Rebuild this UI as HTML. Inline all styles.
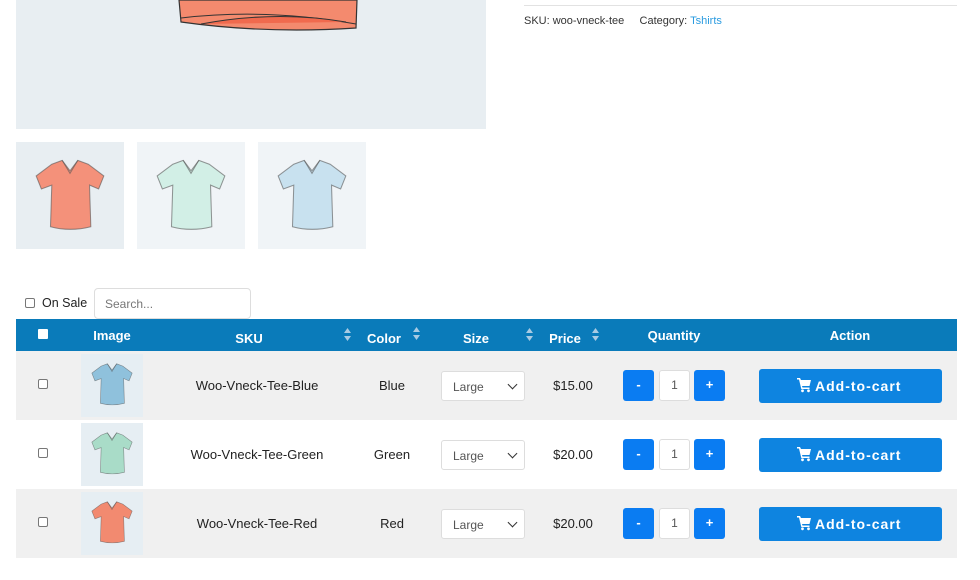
<!DOCTYPE html>
<html><head><meta charset="utf-8"><style>
*{box-sizing:border-box;margin:0;padding:0}
body{width:980px;height:580px;background:#fff;font-family:"Liberation Sans",Arial,sans-serif;position:relative;overflow:hidden;color:#222}
.abs{position:absolute}
.main{left:16px;top:0;width:470px;height:129px;background:#e8eef2}
.th{top:142px;width:108px;height:107px}
.meta{left:524px;top:15px;font-size:11px;color:#333}
.meta a{color:#2a9be0;text-decoration:none}
.hr{left:524px;top:5px;width:433px;height:1px;background:#e2e2e2}
.cb{width:10px;height:10px;border:1px solid #777;border-radius:2px;background:#fff}
.search{left:94px;top:288px;width:157px;height:31px;border:1px solid #ddd;border-radius:4px;font-size:12px;color:#777;padding:8px 10px}
.hdr{left:16px;top:319px;width:941px;height:32px;background:#0a7bba;color:#fff;font-weight:bold;font-size:13px}
.hdr span{position:absolute;transform:translateX(-50%)}
.row{left:16px;width:941px;height:69px}
.c{position:absolute;font-size:13px;transform:translateX(-50%)}
.sel{width:84px;height:30px;border:1px solid #ddd;border-radius:3px;background:#fff;font-size:12px;color:#555;padding:8px 0 0 11px}
.sel:after{content:"";position:absolute;right:8px;top:9px;width:6px;height:6px;border-right:1.5px solid #333;border-bottom:1.5px solid #333;transform:rotate(45deg)}
.qb{width:31px;height:31px;background:#0a7cf2;border-radius:3px;color:#fff;font-weight:bold;font-size:13px;text-align:center;line-height:30px}
.qi{width:31px;height:31px;border:1px solid #ddd;border-radius:3px;background:#fff;font-size:12px;color:#555;text-align:center;line-height:29px}
.btn{width:183px;height:34px;background:#0e84e0;border-radius:3px;color:#fff;font-weight:bold;font-size:14px;line-height:34px;letter-spacing:1px;padding-left:38px;white-space:nowrap}
.btn svg{vertical-align:-2px;margin-right:3px}
.sort{position:absolute}
</style></head><body>
<svg width="0" height="0" style="position:absolute"><defs>
<g id="shirt"><path d="M18 5 L26 2 L32 10 L38 2 L46 5 L58 14 L54 24 L47 21 L48 53 Q32 57 17 53 L18 21 L10 24 L6 14 Z" stroke="#555" stroke-width="0.8" stroke-opacity=".6"/><path d="M26 2 L32 12 L38 2" fill="none" stroke="#555" stroke-width=".8" stroke-opacity=".6"/></g>
<g id="srt"><path d="M0 5 L3.5 0 L7 5Z M0 8 L3.5 13 L7 8Z" fill="#a9cbe3"/></g>
<g id="cart"><path d="M0 0 H3 L4 2 H14 L12.5 8 H5 L5.5 9.5 H12.5 V11 H4.3 L2 1.5 H0 Z" fill="#fff"/><circle cx="5.5" cy="12.8" r="1.4" fill="#fff"/><circle cx="11.5" cy="12.8" r="1.4" fill="#fff"/></g>
</defs></svg>
<div class="abs main"><svg width="470" height="129"><path d="M163 0 L165 22 Q250 34 340 28 L341 0 Z" fill="#f48a6e" stroke="#333" stroke-width="1.2"/><path d="M165 18 Q250 8 340 24" fill="none" stroke="#333"/><path d="M185 24 Q260 10 330 22" fill="#f06a4e" stroke="#333"/></svg></div>
<div class="abs th" style="left:16px;background:#e8eef2"><svg width="108" height="107" viewBox="-9.5 -12 83 82"><use href="#shirt" fill="#f4917a"/></svg></div>
<div class="abs th" style="left:137px;background:#f0f4f7"><svg width="108" height="107" viewBox="-9.5 -12 83 82"><use href="#shirt" fill="#d2efe6"/></svg></div>
<div class="abs th" style="left:258px;background:#f0f4f7"><svg width="108" height="107" viewBox="-9.5 -12 83 82"><use href="#shirt" fill="#c8e1ef"/></svg></div>
<div class="abs hr"></div>
<div class="abs meta">SKU: woo-vneck-tee &nbsp;&nbsp;&nbsp; Category: <a>Tshirts</a></div>
<div class="abs cb" style="left:25px;top:298px"></div>
<div class="abs" style="left:42px;top:296px;font-size:12.5px">On Sale</div>
<div class="abs search">Search...</div>
<div class="abs hdr">
<div class="abs" style="left:22px;top:10px;width:10px;height:10px;background:#fff;border-radius:1px"></div>
<span style="left:96px;top:9px">Image</span>
<span style="left:233px;top:12px">SKU</span>
<svg class="sort" style="left:328px;top:9px" width="7" height="13"><use href="#srt"/></svg>
<span style="left:368px;top:12px">Color</span>
<svg class="sort" style="left:397px;top:8px" width="7" height="13"><use href="#srt"/></svg>
<span style="left:460px;top:12px">Size</span>
<svg class="sort" style="left:510px;top:9px" width="7" height="13"><use href="#srt"/></svg>
<span style="left:549px;top:12px">Price</span>
<svg class="sort" style="left:576px;top:9px" width="7" height="13"><use href="#srt"/></svg>
<span style="left:658px;top:9px">Quantity</span>
<span style="left:834px;top:9px">Action</span>
</div>

<div class="abs row" style="top:351px;background:#f0f0f0">
<div class="abs cb" style="left:22px;top:28px"></div>
<div class="abs" style="left:65px;top:3px;width:62px;height:63px;background:#e6eef3"><svg width="62" height="63" viewBox="-8 -10 80 80"><use href="#shirt" fill="#8fc1dc"/></svg></div>
<div class="c" style="left:241px;top:27px">Woo-Vneck-Tee-Blue</div>
<div class="c" style="left:376px;top:27px">Blue</div>
<div class="abs sel" style="left:425px;top:20px">Large</div>
<div class="c" style="left:557px;top:27px">$15.00</div>
<div class="abs qb" style="left:607px;top:19px">-</div>
<div class="abs qi" style="left:643px;top:19px">1</div>
<div class="abs qb" style="left:678px;top:19px">+</div>
<div class="abs btn" style="left:743px;top:18px"><svg width="15" height="15"><use href="#cart"/></svg>Add-to-cart</div>
</div>
<div class="abs row" style="top:420px;background:#fff">
<div class="abs cb" style="left:22px;top:28px"></div>
<div class="abs" style="left:65px;top:3px;width:62px;height:63px;background:#e6eef3"><svg width="62" height="63" viewBox="-8 -10 80 80"><use href="#shirt" fill="#a9dcc8"/></svg></div>
<div class="c" style="left:241px;top:27px">Woo-Vneck-Tee-Green</div>
<div class="c" style="left:376px;top:27px">Green</div>
<div class="abs sel" style="left:425px;top:20px">Large</div>
<div class="c" style="left:557px;top:27px">$20.00</div>
<div class="abs qb" style="left:607px;top:19px">-</div>
<div class="abs qi" style="left:643px;top:19px">1</div>
<div class="abs qb" style="left:678px;top:19px">+</div>
<div class="abs btn" style="left:743px;top:18px"><svg width="15" height="15"><use href="#cart"/></svg>Add-to-cart</div>
</div>
<div class="abs row" style="top:489px;background:#f0f0f0">
<div class="abs cb" style="left:22px;top:28px"></div>
<div class="abs" style="left:65px;top:3px;width:62px;height:63px;background:#e6eef3"><svg width="62" height="63" viewBox="-8 -10 80 80"><use href="#shirt" fill="#f28a70"/></svg></div>
<div class="c" style="left:241px;top:27px">Woo-Vneck-Tee-Red</div>
<div class="c" style="left:376px;top:27px">Red</div>
<div class="abs sel" style="left:425px;top:20px">Large</div>
<div class="c" style="left:557px;top:27px">$20.00</div>
<div class="abs qb" style="left:607px;top:19px">-</div>
<div class="abs qi" style="left:643px;top:19px">1</div>
<div class="abs qb" style="left:678px;top:19px">+</div>
<div class="abs btn" style="left:743px;top:18px"><svg width="15" height="15"><use href="#cart"/></svg>Add-to-cart</div>
</div>
</body></html>
